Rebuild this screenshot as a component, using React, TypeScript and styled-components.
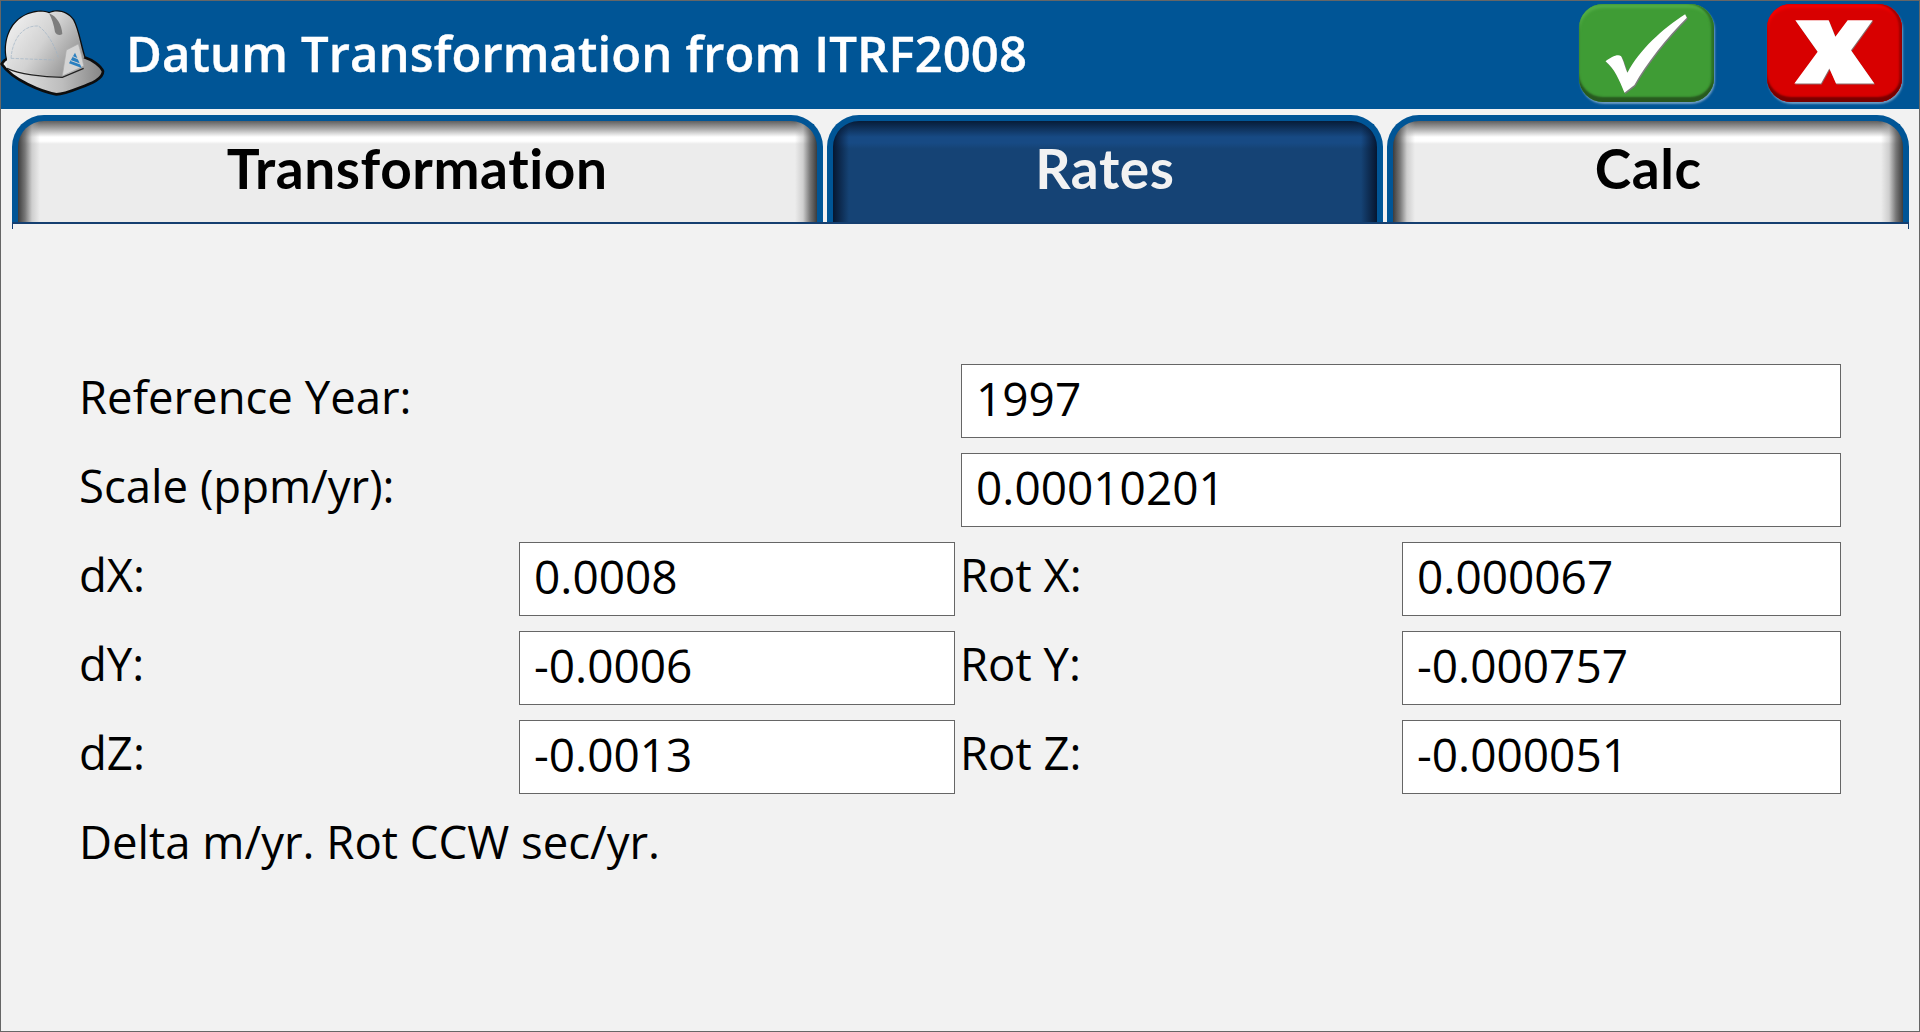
import React from "react";
import styled, { createGlobalStyle } from "styled-components";

const GlobalStyle = createGlobalStyle`
  html, body {
    margin: 0;
    padding: 0;
    background: #f2f2f2;
    overflow: hidden;
  }
  * {
    box-sizing: border-box;
  }
`;

const Window = styled.div`
  width: 1920px;
  height: 1032px;
  border: 1px solid #666;
  background: #f2f2f2;
  font-family: "Open Sans", "Noto Sans", sans-serif;
  color: #000;
`;

const Header = styled.header`
  height: 108px;
  background: #005596;
  display: flex;
  align-items: center;
  padding: 0 17px 4px 0;
`;

const Helmet = styled.svg`
  width: 106px;
  height: 100px;
  flex: none;
  margin: 0 0 6px -2px;
`;

const Title = styled.h1`
  margin: 0 0 0 21px;
  flex: 1;
  font-size: 49px;
  font-weight: 600;
  letter-spacing: 0.1px;
  -webkit-text-stroke: 0.4px #fff;
  color: #fff;
  white-space: nowrap;
`;

const ActionButton = styled.button<{ $tone: "ok" | "cancel" }>`
  width: 135px;
  height: 98px;
  padding: 0;
  margin-left: ${(p) => (p.$tone === "ok" ? "0" : "53px")};
  border: none;
  border-radius: 24px;
  background: ${(p) => (p.$tone === "ok" ? "#3f9c35" : "#d80000")};
  box-shadow:
    inset 0 -5px 2px ${(p) => (p.$tone === "ok" ? "#28591f" : "#780000")},
    inset -3px 0 2px ${(p) => (p.$tone === "ok" ? "#2f7527" : "#a00000")},
    inset 0 4px 3px ${(p) => (p.$tone === "ok" ? "#52ad46" : "#f50000")},
    1px 2px 2px rgba(200, 215, 235, 0.55);
  svg {
    display: block;
    width: 100%;
    height: 100%;
  }
`;

const TabBar = styled.nav`
  position: relative;
  display: flex;
  gap: 4px;
  height: 109px;
  margin: 6px 10px 0 11px;
  border-bottom: 2px solid #153f70;

  &::before,
  &::after {
    content: "";
    position: absolute;
    bottom: -7px;
    width: 1px;
    height: 7px;
    background: #153f70;
  }
  &::before {
    left: 0;
  }
  &::after {
    right: 0;
  }
`;

const Tab = styled.div<{ $width: number; $active?: boolean }>`
  width: ${(p) => p.$width}px;
  display: flex;
  align-items: center;
  justify-content: center;
  padding-bottom: 7px;
  border: 6px solid #005596;
  border-bottom: none;
  border-radius: 32px 32px 0 0;
  font-family: Lato, "Open Sans", sans-serif;
  font-size: 55px;
  font-weight: 700;
  letter-spacing: 0.6px;
  color: ${(p) => (p.$active ? "#f2f2f2" : "#000")};
  background: ${(p) =>
    p.$active
      ? `linear-gradient(to right, rgba(5, 20, 45, 0.95), rgba(5, 20, 45, 0)) left / 16px 100% no-repeat,
         linear-gradient(to left, rgba(5, 20, 45, 0.95), rgba(5, 20, 45, 0)) right / 16px 100% no-repeat,
         linear-gradient(to bottom, #071c38 0, #174a84 16px, #174a84 22px, #154375 28px)`
      : `linear-gradient(to right, rgba(60, 60, 60, 1), rgba(90, 90, 90, 0.8) 7px, rgba(170, 170, 170, 0.45) 14px, rgba(236, 236, 236, 0) 22px) left / 22px 100% no-repeat,
         linear-gradient(to left, rgba(60, 60, 60, 1), rgba(90, 90, 90, 0.8) 7px, rgba(170, 170, 170, 0.45) 14px, rgba(236, 236, 236, 0) 22px) right / 22px 100% no-repeat,
         linear-gradient(to bottom, #606060 0, #aaa 8px, #fff 16px, #fff 20px, #ececec 23px)`};
`;

const Form = styled.main`
  display: grid;
  grid-template-columns: 440px 436px 6px 441px 439px;
  grid-auto-rows: 74px;
  row-gap: 15px;
  padding: 140px 0 0 78px;
  font-size: 46px;
`;

const FieldLabel = styled.label<{ $span?: boolean; $column?: number }>`
  grid-column: ${(p) => (p.$span ? `${p.$column ?? 1} / span 3` : (p.$column ?? 1))};
  align-self: center;
  margin-top: -10px;
  margin-left: ${(p) => (p.$column === 4 ? "-1px" : "0")};
  font-size: 45.5px;
  white-space: nowrap;
`;

const Field = styled.input<{ $wide?: boolean; $column: number }>`
  grid-column: ${(p) => (p.$wide ? `${p.$column} / span 2` : p.$column)};
  width: 100%;
  height: 74px;
  padding: 0 0 7px 14px;
  border: 1px solid #666;
  border-radius: 0;
  background: #fff;
  font: inherit;
  color: #000;
  outline: none;
`;

const HardHat = () => (
  <Helmet viewBox="0 0 318 300">
    <defs>
      <linearGradient id="shell" x1="0" y1="0" x2="1" y2="0.6">
        <stop offset="0" stopColor="#f6f6f6" />
        <stop offset="0.55" stopColor="#d2d2d2" />
        <stop offset="1" stopColor="#949494" />
      </linearGradient>
      <linearGradient id="rim" x1="0" y1="0" x2="1" y2="0">
        <stop offset="0" stopColor="#ececec" />
        <stop offset="0.6" stopColor="#bdbdbd" />
        <stop offset="1" stopColor="#858585" />
      </linearGradient>
    </defs>
    <path
      d="M8 192 C14 182 20 178 24 176 C14 130 30 78 66 54 C90 38 125 30 150 40 C175 28 205 36 222 60 C238 90 245 140 256 172 C280 180 305 196 312 214 C312 236 280 250 240 264 C215 274 190 283 172 283 C130 276 40 240 8 192 Z"
      fill="url(#rim)"
      stroke="#0d0d0d"
      strokeWidth="8"
      strokeLinejoin="round"
    />
    <path
      d="M24 176 C14 130 30 78 66 54 C90 38 125 30 150 40 C175 28 205 36 222 60 C238 90 245 140 256 172 C240 195 210 222 190 232 C130 228 60 215 24 205 Z"
      fill="url(#shell)"
    />
    <path d="M24 205 C60 222 130 232 190 232 L254 205" fill="none" stroke="#222" strokeWidth="4" />
    <path d="M150 40 C175 50 188 75 190 102 C182 108 172 104 168 96 C165 75 158 55 150 40 Z" fill="#7d7d7d" />
    <path
      d="M36 175 C40 120 70 75 118 78 C140 92 165 130 178 172"
      fill="none"
      stroke="#9fb2c4"
      strokeWidth="2"
      strokeDasharray="10 3"
    />
    <path d="M36 175 L165 180" fill="none" stroke="#9fb2c4" strokeWidth="2" strokeDasharray="10 4" />
    <path d="M190 228 L202 150 L238 132 C245 155 250 175 254 198 Z" fill="#d4d4d4" stroke="#aaa" strokeWidth="2" />
    <path d="M228 158 L210 190 L248 204 Z" fill="#2a7fc0" />
    <path d="M222 170 L240 178 M216 182 L244 192" stroke="#d4d4d4" strokeWidth="3" />
  </Helmet>
);

const CheckGlyph = () => (
  <svg viewBox="118 12 407 293">
    <path
      d="M198 183 C215 170 235 160 245 168 C252 180 258 205 264 218 C300 150 370 85 438 42 L443 52 C385 110 320 190 285 255 L255 278 C240 240 225 205 198 183 Z"
      fill="#7c7c7c"
      transform="translate(3 4)"
    />
    <path
      d="M198 183 C215 170 235 160 245 168 C252 180 258 205 264 218 C300 150 370 85 438 42 L443 52 C385 110 320 190 285 255 L255 278 C240 240 225 205 198 183 Z"
      fill="#fff"
    />
  </svg>
);

const CrossGlyph = () => (
  <svg viewBox="683 12 405 293">
    <path
      d="M768 60 L868 60 L888 110 L925 60 L1000 60 L935 150 L1005 250 L890 250 L870 205 L845 250 L765 250 L835 155 Z"
      fill="#8a6a6a"
      transform="translate(2 3)"
    />
    <path
      d="M768 60 L868 60 L888 110 L925 60 L1000 60 L935 150 L1005 250 L890 250 L870 205 L845 250 L765 250 L835 155 Z"
      fill="#fff"
    />
  </svg>
);

const deltas = [
  { label: "dX:", value: "0.0008", rotLabel: "Rot X:", rot: "0.000067" },
  { label: "dY:", value: "-0.0006", rotLabel: "Rot Y:", rot: "-0.000757" },
  { label: "dZ:", value: "-0.0013", rotLabel: "Rot Z:", rot: "-0.000051" },
];

export default function App() {
  return (
    <Window>
      <GlobalStyle />
      <Header>
        <HardHat />
        <Title>Datum Transformation from ITRF2008</Title>
        <ActionButton $tone="ok">
          <CheckGlyph />
        </ActionButton>
        <ActionButton $tone="cancel">
          <CrossGlyph />
        </ActionButton>
      </Header>
      <TabBar>
        <Tab $width={811}>Transformation</Tab>
        <Tab $width={557} $active>
          Rates
        </Tab>
        <Tab $width={522}>Calc</Tab>
      </TabBar>
      <Form>
        <FieldLabel $span>Reference Year:</FieldLabel>
        <Field $wide $column={4} readOnly value="1997" />
        <FieldLabel $span>Scale (ppm/yr):</FieldLabel>
        <Field $wide $column={4} readOnly value="0.00010201" />
        {deltas.map((row) => (
          <React.Fragment key={row.label}>
            <FieldLabel>{row.label}</FieldLabel>
            <Field $column={2} readOnly value={row.value} />
            <FieldLabel $column={4}>{row.rotLabel}</FieldLabel>
            <Field $column={5} readOnly value={row.rot} />
          </React.Fragment>
        ))}
        <FieldLabel $span>Delta m/yr. Rot CCW sec/yr.</FieldLabel>
      </Form>
    </Window>
  );
}
